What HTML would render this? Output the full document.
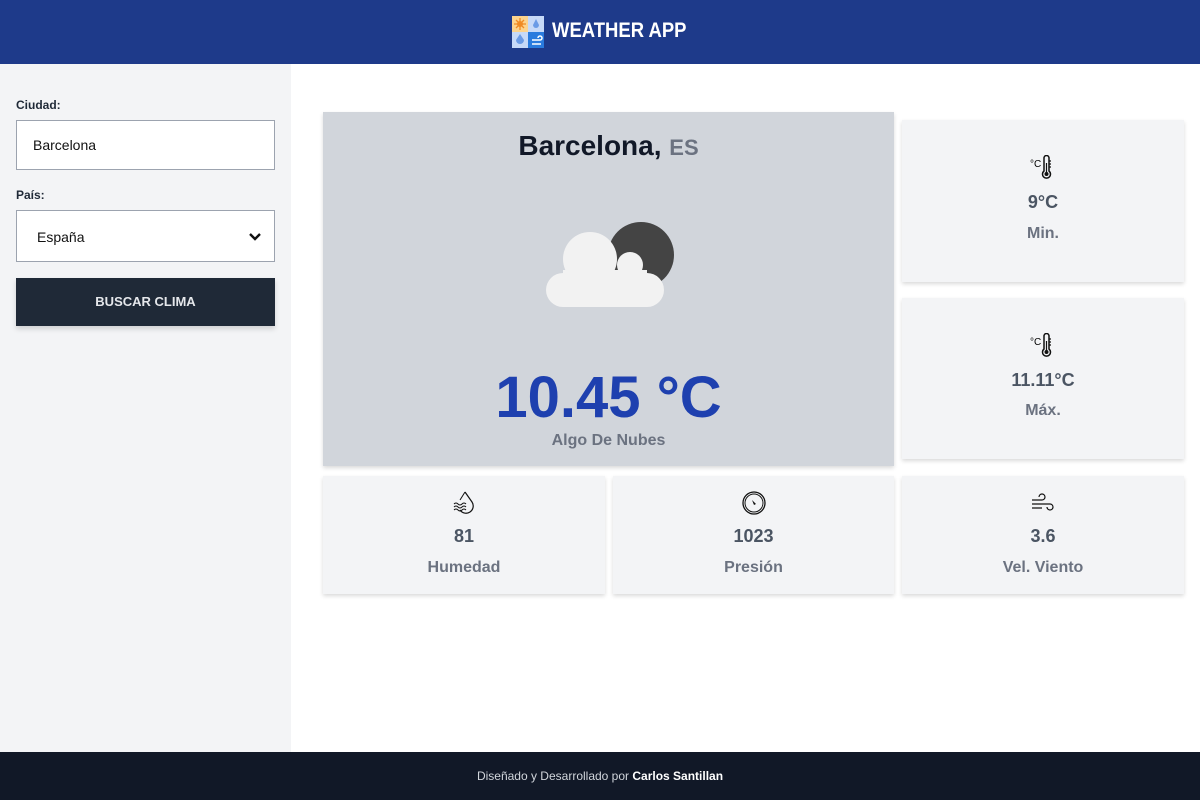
<!DOCTYPE html>
<html><head><meta charset="utf-8"><style>
*{box-sizing:border-box;margin:0;padding:0}
body{width:1200px;height:800px;font-family:"Liberation Sans",sans-serif;background:#fff;position:relative;overflow:hidden}
.hdr{position:absolute;top:0;left:0;width:1200px;height:64px;background:#1e3a8a;color:#fff}
.hdr .t{position:absolute;left:552px;top:19px;font-size:21px;font-weight:bold;transform:scaleX(.88);transform-origin:left}
.side{position:absolute;top:64px;left:0;width:291px;height:688px;background:#f3f4f6}
.lbl{position:absolute;left:16px;font-size:12px;font-weight:bold;color:#1f2937}
.inp{position:absolute;left:16px;width:259px;background:#fff;border:1px solid #9ca3af;font-size:14px;color:#111}
.btn{position:absolute;left:16px;top:278px;width:259px;height:48px;background:#1f2937;color:#e5e7eb;font-size:13px;font-weight:bold;text-align:center;line-height:48px;box-shadow:0 3px 5px rgba(0,0,0,.15)}
.card{position:absolute;background:#f3f4f6;box-shadow:0 2px 4px rgba(0,0,0,.15);text-align:center}
.card .v{position:absolute;width:100%;font-size:18px;font-weight:bold;color:#4b5563}
.card .l{position:absolute;width:100%;font-size:16px;font-weight:bold;color:#6b7280}
.card svg{position:absolute;left:50%;transform:translateX(-50%)}
.main{position:absolute;left:323px;top:112px;width:571px;height:354px;background:#d1d5db;box-shadow:0 2px 4px rgba(0,0,0,.15);text-align:center}
.ftr{position:absolute;top:752px;left:0;width:1200px;height:48px;background:#111827;color:#d1d5db;font-size:12px;text-align:center;line-height:48px}
</style></head><body>
<div class="hdr">
<svg style="position:absolute;left:512px;top:16px" width="32" height="32" viewBox="0 0 32 32">
<rect x="0" y="0" width="16" height="16" fill="#fcd38d"/><rect x="16" y="0" width="16" height="16" fill="#c7d9f8"/>
<rect x="0" y="16" width="16" height="16" fill="#c7d9f8"/><rect x="16" y="16" width="16" height="16" fill="#2a7bde"/>
<circle cx="8" cy="8" r="3" fill="#f08a24"/><path d="M8 2v12M2 8h12M4 4l8 8M12 4l-8 8" stroke="#f08a24" stroke-width="1.3"/>
<path d="M24 3l3 6a3 3 0 1 1-6 0z" fill="#6b9be6"/>
<path d="M8 18l4 6a4 4 0 1 1-8 0z" fill="#6b9be6"/>
<path d="M20 24h8a2 2 0 1 0-2-2M20 28h9" stroke="#fff" stroke-width="1.5" fill="none"/>
</svg>
<div class="t">WEATHER APP</div></div>
<div class="side">
<div class="lbl" style="top:34px">Ciudad:</div>
<div class="inp" style="top:56px;height:50px;padding:16px">Barcelona</div>
<div class="lbl" style="top:124px">País:</div>
<div class="inp" style="top:146px;height:52px;padding:18px 20px">España
<svg style="position:absolute;right:12px;top:21px" width="14" height="10" viewBox="0 0 14 10"><path d="M2 2l5 5 5-5" stroke="#111" stroke-width="2.4" fill="none"/></svg></div>
<div class="btn" style="top:214px">BUSCAR CLIMA</div>
</div>
<div class="main">
<div style="position:absolute;top:18px;width:100%;font-size:28px;font-weight:bold;color:#111827">Barcelona, <span style="font-size:22px;color:#6b7280">ES</span></div>
<svg style="position:absolute;left:218px;top:106px" width="140" height="96" viewBox="0 0 140 96">
<circle cx="100" cy="37" r="33" fill="#444"/>
<g fill="#f2f2f2">
<circle cx="22" cy="72" r="17"/><circle cx="49" cy="41" r="27"/><circle cx="89" cy="47" r="13"/><circle cx="106" cy="72" r="17"/>
<rect x="22" y="52" width="84" height="37"/>
</g>
</svg>
<div style="position:absolute;top:252px;width:100%;font-size:58px;font-weight:bold;color:#1e40af">10.45 °C</div>
<div style="position:absolute;top:320px;width:100%;font-size:16px;font-weight:bold;color:#6b7280">Algo De Nubes</div>
</div>
<div class="card" style="left:902px;top:120px;width:282px;height:162px">
<svg style="top:35px" width="26" height="26" viewBox="0 0 26 26"><text x="0" y="12" font-size="10" font-family="Liberation Sans">°C</text><path d="M14 3a2.5 2.5 0 0 1 5 0v13a4 4 0 1 1-5 0z" stroke="#111" stroke-width="1.5" fill="none"/><circle cx="16.5" cy="19" r="2" fill="#111"/><path d="M16.5 8v10M19 6h2M19 9h2M19 12h2" stroke="#111" stroke-width="1.2"/></svg>
<div class="v" style="top:72px">9°C</div><div class="l" style="top:105px">Min.</div></div>
<div class="card" style="left:902px;top:298px;width:282px;height:161px">
<svg style="top:35px" width="26" height="26" viewBox="0 0 26 26"><text x="0" y="12" font-size="10" font-family="Liberation Sans">°C</text><path d="M14 3a2.5 2.5 0 0 1 5 0v13a4 4 0 1 1-5 0z" stroke="#111" stroke-width="1.5" fill="none"/><circle cx="16.5" cy="19" r="2" fill="#111"/><path d="M16.5 8v10M19 6h2M19 9h2M19 12h2" stroke="#111" stroke-width="1.2"/></svg>
<div class="v" style="top:72px">11.11°C</div><div class="l" style="top:104px">Máx.</div></div>
<div class="card" style="left:323px;top:476px;width:282px;height:118px">
<svg style="top:14px" width="26" height="26" viewBox="0 0 26 26"><path d="M14 2l7 10a7 7 0 1 1-12 8" stroke="#111" stroke-width="1.2" fill="none"/><path d="M14 2l-5 8M3 14q2-2 4 0t4 0t4 0M3 17q2-2 4 0t4 0t4 0M3 20q2-2 4 0t4 0t4 0" stroke="#111" stroke-width="1" fill="none"/></svg>
<div class="v" style="top:50px">81</div><div class="l" style="top:83px">Humedad</div></div>
<div class="card" style="left:613px;top:476px;width:281px;height:118px">
<svg style="top:14px" width="26" height="26" viewBox="0 0 26 26"><circle cx="13" cy="13" r="11" stroke="#111" stroke-width="1.3" fill="none"/><circle cx="13" cy="13" r="9" stroke="#111" stroke-width="1" fill="none"/><path d="M11 10l4 4-2 1z" fill="#111"/></svg>
<div class="v" style="top:50px">1023</div><div class="l" style="top:83px">Presión</div></div>
<div class="card" style="left:902px;top:476px;width:282px;height:118px">
<svg style="top:14px" width="26" height="26" viewBox="0 0 26 26"><path d="M2 10h10a3 3 0 1 0-3-3M2 14h18a3 3 0 1 1-3 3M2 18h10" stroke="#111" stroke-width="1.2" fill="none"/></svg>
<div class="v" style="top:50px">3.6</div><div class="l" style="top:83px">Vel. Viento</div></div>
<div class="ftr">Diseñado y Desarrollado por <b style="color:#fff">Carlos Santillan</b></div>
</body></html>
